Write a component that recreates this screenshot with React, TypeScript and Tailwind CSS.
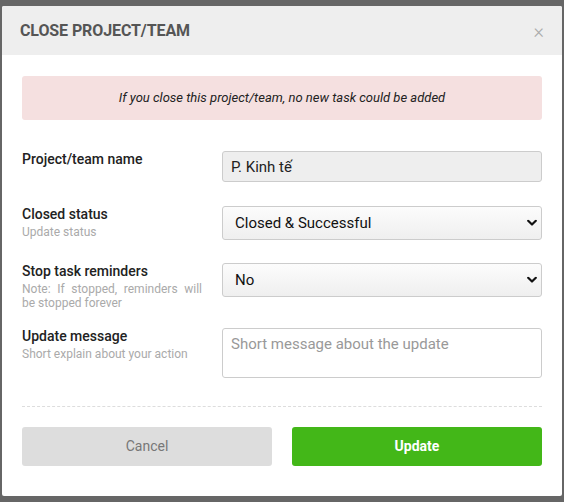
import React, { useState } from 'react';

const Chevron = () => (
  <svg className="pointer-events-none absolute right-[5px] top-1/2 -translate-y-1/2 w-[10px] h-[7px]" viewBox="0 0 10 7">
    <path d="M1.2 1.3 L5 5 L8.8 1.3" fill="none" stroke="#111" strokeWidth="2.2" strokeLinecap="round" strokeLinejoin="round" />
  </svg>
);

export default function App() {
  const [status, setStatus] = useState('success');
  const [stop, setStop] = useState('no');
  const [message, setMessage] = useState('');

  return (
    <div className="w-[564px] h-[502px] bg-[#666666] pt-[6px] pl-[2px]" style={{ fontFamily: 'Roboto, "Noto Sans", sans-serif' }}>
      <div className="w-[560px] h-[490px] bg-white rounded-[2px] overflow-hidden">
        {/* Header */}
        <div className="h-[49px] bg-[#eeeeee] flex items-center justify-between pl-[18px] pr-[18px]">
          <h3 className="text-[16px] font-bold text-[#555555] uppercase tracking-[-0.1px]">Close project/team</h3>
          <button className="text-[#aaaaaa] text-[20px] leading-none font-light">×</button>
        </div>

        <div className="px-[20px] pt-[21px]">
          {/* Alert */}
          <div className="h-[44px] bg-[#f5e0e0] rounded-[3px] flex items-center justify-center text-[13px] italic text-[#222]">
            If you close this project/team, no new task could be added
          </div>

          {/* Project name */}
          <div className="flex gap-[20px] mt-[31px]">
            <div className="w-[180px]">
              <div className="text-[14px] font-medium text-[#222] leading-[16px]">Project/team name</div>
            </div>
            <input
              readOnly
              value="P. Kinh tế"
              className="w-[320px] h-[31px] bg-[#eeeeee] border border-[#cccccc] rounded-[3px] px-[8px] text-[15px] text-[#222] outline-none"
            />
          </div>

          {/* Closed status */}
          <div className="flex gap-[20px] mt-[24px]">
            <div className="w-[180px]">
              <div className="text-[14px] font-medium text-[#222] leading-[16px]">Closed status</div>
              <div className="text-[12px] text-[#aaaaaa] leading-[14px] mt-[3px]">Update status</div>
            </div>
            <div className="relative w-[320px]">
              <select
                value={status}
                onChange={(e) => setStatus(e.target.value)}
                className="appearance-none w-full h-[34px] border border-[#cccccc] rounded-[3px] pl-[12px] text-[15px] text-[#111] bg-gradient-to-b from-[#fcfcfc] to-[#efefef] outline-none"
              >
                <option value="success">Closed &amp; Successful</option>
                <option value="fail">Closed &amp; Failed</option>
              </select>
              <Chevron />
            </div>
          </div>

          {/* Stop reminders */}
          <div className="flex gap-[20px] mt-[23px]">
            <div className="w-[180px]">
              <div className="text-[14px] font-medium text-[#222] leading-[16px]">Stop task reminders</div>
              <div className="text-[12px] text-[#aaaaaa] leading-[14px] mt-[3px] text-justify">
                Note: If stopped, reminders will be stopped forever
              </div>
            </div>
            <div className="relative w-[320px] self-start">
              <select
                value={stop}
                onChange={(e) => setStop(e.target.value)}
                className="appearance-none w-full h-[34px] border border-[#cccccc] rounded-[3px] pl-[12px] text-[15px] text-[#111] bg-gradient-to-b from-[#fcfcfc] to-[#efefef] outline-none"
              >
                <option value="no">No</option>
                <option value="yes">Yes</option>
              </select>
              <Chevron />
            </div>
          </div>

          {/* Update message */}
          <div className="flex gap-[20px] mt-[18px]">
            <div className="w-[180px]">
              <div className="text-[14px] font-medium text-[#222] leading-[16px]">Update message</div>
              <div className="text-[12px] text-[#aaaaaa] leading-[14px] mt-[3px]">Short explain about your action</div>
            </div>
            <textarea
              value={message}
              onChange={(e) => setMessage(e.target.value)}
              placeholder="Short message about the update"
              className="w-[320px] h-[50px] border border-[#cccccc] rounded-[3px] px-[8px] py-[4px] text-[15px] text-[#222] placeholder:text-[#999] resize-none outline-none"
            />
          </div>

          {/* Divider */}
          <div className="border-t border-dashed border-[#dddddd] mt-[28px]" />

          {/* Buttons */}
          <div className="flex gap-[20px] mt-[20px]">
            <button className="flex-1 h-[39px] bg-[#dddddd] rounded-[3px] text-[14px] text-[#777777]">Cancel</button>
            <button className="flex-1 h-[39px] bg-[#43b718] rounded-[3px] text-[14px] font-bold text-white">Update</button>
          </div>
        </div>
      </div>
    </div>
  );
}
